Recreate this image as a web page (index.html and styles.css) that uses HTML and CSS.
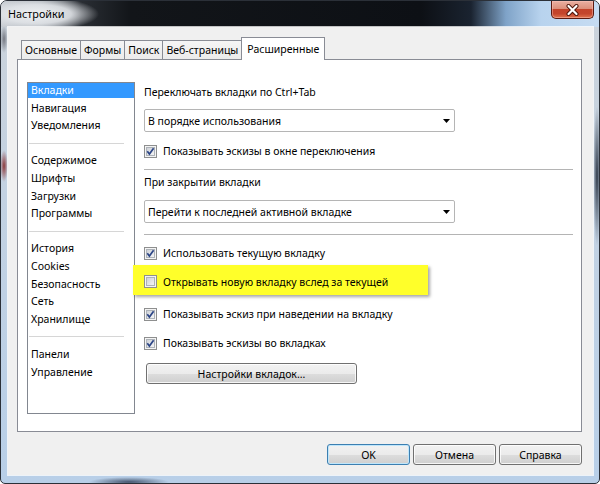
FILE: index.html
```html
<!DOCTYPE html>
<html lang="ru">
<head>
<meta charset="utf-8">
<title>Настройки</title>
<link rel="stylesheet" href="styles.css">
</head>
<body>
<svg class="defs" width="0" height="0" aria-hidden="true">
  <defs>
    <linearGradient id="cbfill" x1="0" y1="0" x2="1" y2="1">
      <stop offset="0" stop-color="#cbcfd5"/>
      <stop offset="1" stop-color="#f7f7f7"/>
    </linearGradient>
  </defs>
</svg>
<div class="window">
  <div class="titlebar">
    <span class="title">Настройки</span>
    <div class="close">
      <svg width="15" height="12" viewBox="0 0 15 12"><path d="M3.5 2 L11.5 10 M11.5 2 L3.5 10" stroke="#4a1208" stroke-width="4" stroke-linecap="round" fill="none"/><path d="M3.5 2 L11.5 10 M11.5 2 L3.5 10" stroke="#ffffff" stroke-width="2.2" stroke-linecap="round" fill="none"/></svg>
    </div>
  </div>
  <div class="client">
    <div class="tabs">
      <div class="tab">Основные</div>
      <div class="tab">Формы</div>
      <div class="tab">Поиск</div>
      <div class="tab">Веб-страницы</div>
      <div class="tab active">Расширенные</div>
    </div>
    <div class="panel">
      <ul class="list">
        <li class="sel">Вкладки</li>
        <li>Навигация</li>
        <li>Уведомления</li>
        <li class="sep"></li>
        <li>Содержимое</li>
        <li>Шрифты</li>
        <li>Загрузки</li>
        <li>Программы</li>
        <li class="sep"></li>
        <li>История</li>
        <li>Cookies</li>
        <li>Безопасность</li>
        <li>Сеть</li>
        <li>Хранилище</li>
        <li class="sep"></li>
        <li>Панели</li>
        <li>Управление</li>
      </ul>
      <div class="settings">
        <div class="label">Переключать вкладки по Ctrl+Tab</div>
        <div class="select select-1"><span>В порядке использования</span><svg width="7" height="4" viewBox="0 0 7 4"><path d="M0 0 H7 L3.5 4 Z" fill="#000"/></svg></div>
        <div class="row row-1">
          <svg class="cb" width="13" height="13" viewBox="0 0 13 13"><rect x="0.5" y="0.5" width="12" height="12" fill="#f4f4f4" stroke="#8e8f8f"/><rect x="2.5" y="2.5" width="8" height="8" fill="url(#cbfill)" stroke="#aeb3b9"/><path d="M3.3 6.3 L5.4 9 L9.6 3.2" stroke="#2c4586" stroke-width="1.7" fill="none"/></svg>
          <span>Показывать эскизы в окне переключения</span>
        </div>
        <div class="divider divider-1"></div>
        <div class="label label-2">При закрытии вкладки</div>
        <div class="select select-2"><span>Перейти к последней активной вкладке</span><svg width="7" height="4" viewBox="0 0 7 4"><path d="M0 0 H7 L3.5 4 Z" fill="#000"/></svg></div>
        <div class="divider divider-2"></div>
        <div class="row row-2">
          <svg class="cb" width="13" height="13" viewBox="0 0 13 13"><rect x="0.5" y="0.5" width="12" height="12" fill="#f4f4f4" stroke="#8e8f8f"/><rect x="2.5" y="2.5" width="8" height="8" fill="url(#cbfill)" stroke="#aeb3b9"/><path d="M3.3 6.3 L5.4 9 L9.6 3.2" stroke="#2c4586" stroke-width="1.7" fill="none"/></svg>
          <span>Использовать текущую вкладку</span>
        </div>
        <div class="row highlight">
          <svg class="cb" width="13" height="13" viewBox="0 0 13 13"><rect x="0.5" y="0.5" width="12" height="12" fill="#f4f4f4" stroke="#8e8f8f"/><rect x="2.5" y="2.5" width="8" height="8" fill="url(#cbfill)" stroke="#aeb3b9"/></svg>
          <span>Открывать новую вкладку вслед за текущей</span>
        </div>
        <div class="row row-3">
          <svg class="cb" width="13" height="13" viewBox="0 0 13 13"><rect x="0.5" y="0.5" width="12" height="12" fill="#f4f4f4" stroke="#8e8f8f"/><rect x="2.5" y="2.5" width="8" height="8" fill="url(#cbfill)" stroke="#aeb3b9"/><path d="M3.3 6.3 L5.4 9 L9.6 3.2" stroke="#2c4586" stroke-width="1.7" fill="none"/></svg>
          <span>Показывать эскиз при наведении на вкладку</span>
        </div>
        <div class="row row-4">
          <svg class="cb" width="13" height="13" viewBox="0 0 13 13"><rect x="0.5" y="0.5" width="12" height="12" fill="#f4f4f4" stroke="#8e8f8f"/><rect x="2.5" y="2.5" width="8" height="8" fill="url(#cbfill)" stroke="#aeb3b9"/><path d="M3.3 6.3 L5.4 9 L9.6 3.2" stroke="#2c4586" stroke-width="1.7" fill="none"/></svg>
          <span>Показывать эскизы во вкладках</span>
        </div>
        <button class="btn btn-tabs" type="button">Настройки вкладок...</button>
      </div>
    </div>
    <div class="buttons">
      <button class="btn btn-main default" type="button">OK</button>
      <button class="btn btn-main" type="button">Отмена</button>
      <button class="btn btn-main" type="button">Справка</button>
    </div>
  </div>
</div>
</body>
</html>
```

FILE: styles.css
```css
* {
  box-sizing: border-box;
  margin: 0;
  padding: 0;
}

html, body {
  width: 600px;
  height: 484px;
  overflow: hidden;
  background: #ffffff;
}

body {
  font-family: "Noto Sans", "Open Sans", sans-serif;
  font-size: 10.5px;
  color: #000;
}

.defs {
  display: block;
  width: 0;
  height: 0;
  overflow: hidden;
}

.window {
  width: 600px;
  height: 484px;
  border: 1px solid #2b3038;
  border-radius: 7px 7px 5px 5px;
  overflow: hidden;
  display: flex;
  flex-direction: column;
  background:
    radial-gradient(ellipse 4px 16px at 3px 165px, rgba(130, 30, 30, 0.85), rgba(130, 30, 30, 0)),
    radial-gradient(ellipse 4px 14px at 3px 38px, rgba(60, 60, 70, 0.6), rgba(60, 60, 70, 0)),
    radial-gradient(ellipse 4px 70px at 596px 175px, rgba(30, 40, 55, 0.9), rgba(30, 40, 55, 0)),
    radial-gradient(ellipse 40px 5px at 128px 481px, rgba(50, 65, 90, 0.85), rgba(50, 65, 90, 0)),
    linear-gradient(180deg, #ccd3da 0%, #c3d2e2 40%, #b8cfe8 100%);
}

.titlebar {
  height: 26px;
  flex: none;
  display: flex;
  justify-content: space-between;
  align-items: flex-start;
  background:
    radial-gradient(ellipse 62px 17px at 36px 13px, rgba(238, 240, 242, 1) 0%, rgba(225, 228, 232, 0.9) 55%, rgba(225, 228, 232, 0) 100%),
    linear-gradient(90deg, #c4c9cf 0px, #9ea4ab 40px, #2a2e34 80px, #121519 130px, #0d1015 420px, #1a2330 470px, #7fa3c8 505px, #b8d3ee 540px, #c6dcf2 600px);
}

.title {
  padding-left: 7px;
  line-height: 26px;
  font-size: 10.8px;
  color: #000;
}

.close {
  width: 43px;
  height: 18px;
  margin-right: 5px;
  border: 1px solid #5b1a10;
  border-top: none;
  border-radius: 0 0 5px 5px;
  background: linear-gradient(180deg, #eab0a2 0%, #dc8f7b 45%, #c3432a 50%, #c4452c 75%, #e0744e 100%);
  box-shadow: inset 0 0 0 1px rgba(255, 200, 190, 0.45);
  display: flex;
  align-items: center;
  justify-content: center;
}

.client {
  flex: none;
  height: 448px;
  margin: 0 6px 0 7px;
  background: #f0f0f0;
  box-shadow: 0 0 0 1px rgba(255, 255, 255, 0.75);
  display: flex;
  flex-direction: column;
}

.tabs {
  margin-top: 10px;
  height: 22px;
  padding-left: 13px;
  display: flex;
  align-items: flex-end;
  position: relative;
  z-index: 1;
}

.tab {
  height: 19px;
  padding: 1px 3px 0;
  margin-right: -1px;
  border: 1px solid #898c95;
  border-bottom: none;
  background: linear-gradient(180deg, #f5f5f5 0%, #ebebeb 100%);
  line-height: 17px;
  white-space: nowrap;
}

.tab.active {
  height: 23px;
  margin-bottom: -1px;
  padding: 2px 5px 0;
  background: #ffffff;
  line-height: 18px;
}

.panel {
  height: 373px;
  margin: 0 11px 0 9px;
  border: 1px solid #898c95;
  background: #ffffff;
  padding: 22px 0 0 9px;
  display: flex;
  align-items: flex-start;
}

.list {
  list-style: none;
  width: 108px;
  height: 332px;
  border: 1px solid #828790;
  background: #ffffff;
  flex: none;
}

.list li {
  height: 15px;
  line-height: 15px;
  margin-bottom: 2.6px;
  padding-left: 3px;
  white-space: nowrap;
}

.list li.sel {
  background: #3399ff;
  color: #ffffff;
}

.list li.sep {
  display: flex;
  align-items: center;
  padding: 0 10px 0 1px;
}

.list li.sep::before {
  content: "";
  display: block;
  flex: 1;
  height: 1px;
  background: #d6d6d6;
}

.settings {
  margin-left: 9px;
  width: 430px;
  padding-top: 2px;
  display: flex;
  flex-direction: column;
  align-items: flex-start;
}

.label {
  height: 16px;
  line-height: 16px;
  white-space: nowrap;
}

.label-2 {
  margin-top: 4px;
}

.select {
  width: 311px;
  height: 23px;
  border: 1px solid #b5b5b5;
  border-radius: 2px;
  background: #ffffff;
  display: flex;
  align-items: center;
  justify-content: space-between;
  padding: 0 4px 0 3px;
  white-space: nowrap;
}

.select-1 {
  margin-top: 9px;
}

.select-2 {
  margin-top: 10px;
}

.divider {
  width: 429px;
  height: 1px;
  background: #b4b4b4;
}

.divider-1 {
  margin-top: 10px;
}

.divider-2 {
  margin-top: 11px;
}

.row {
  height: 16px;
  display: flex;
  align-items: center;
  gap: 6px;
  white-space: nowrap;
}

.cb {
  flex: none;
  display: block;
}

.row-1 {
  margin-top: 11px;
}

.row-2 {
  margin-top: 10px;
}

.highlight {
  margin-top: 4px;
  margin-left: -11px;
  width: 295px;
  height: 30px;
  padding: 3px 0 0 11px;
  background: #ffff2a;
  box-shadow: 2px 2px 3px rgba(0, 0, 0, 0.35);
}

.row-3 {
  margin-top: 11px;
}

.row-4 {
  margin-top: 13px;
}

.btn {
  font-family: inherit;
  font-size: 10.5px;
  color: #000;
  height: 21px;
  border: 1px solid #707070;
  border-radius: 3px;
  background: linear-gradient(180deg, #f2f2f2 0%, #ebebeb 50%, #dddddd 51%, #cfcfcf 100%);
  box-shadow: inset 0 0 0 1px rgba(255, 255, 255, 0.8);
  display: flex;
  align-items: center;
  justify-content: center;
  line-height: 16px;
}

.btn-tabs {
  margin-top: 12px;
  margin-left: 2px;
  width: 211px;
}

.buttons {
  margin-top: 12px;
  margin-right: 11px;
  display: flex;
  justify-content: flex-end;
  gap: 3px;
}

.btn-main {
  width: 83px;
}

.btn-main.default {
  border-color: #3c7fb1;
  box-shadow: inset 0 0 0 1px #bfe6fb;
}
```
